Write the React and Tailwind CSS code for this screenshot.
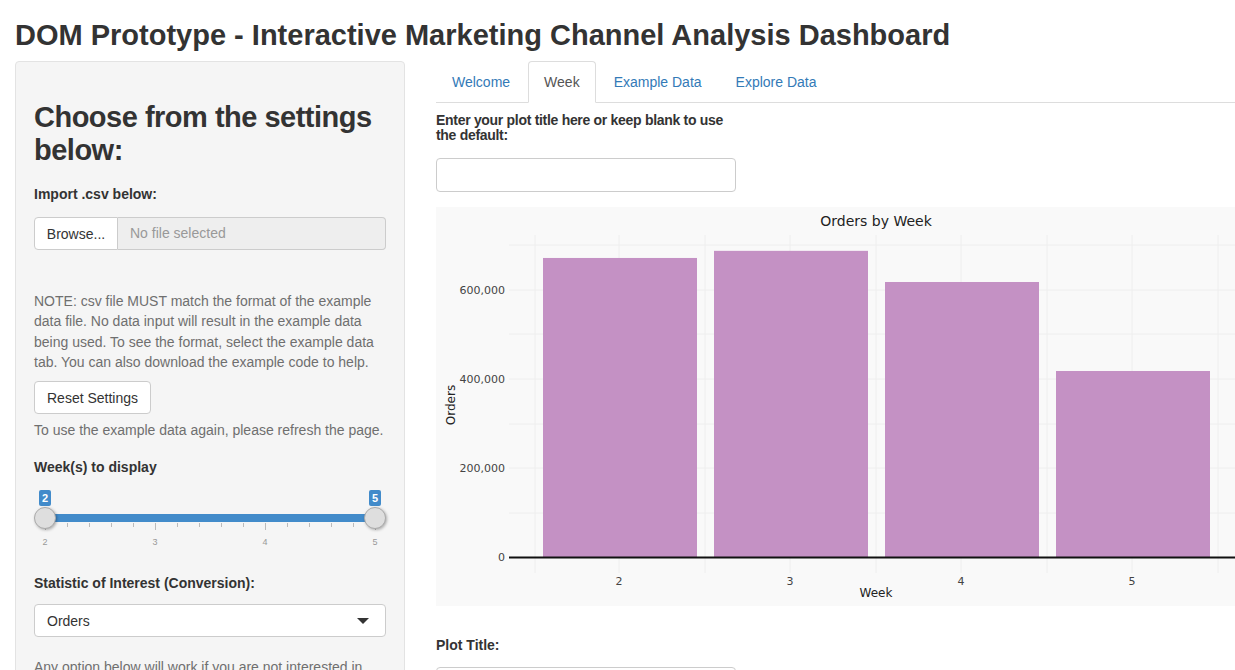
import { useState } from 'react';

const weeks = [
    { week: 2, orders: 672000 },
    { week: 3, orders: 688000 },
    { week: 4, orders: 618000 },
    { week: 5, orders: 418000 },
];

// chart geometry (svg coords)
const ZERO_Y = 350;
const PX_PER_ORDER = 89 / 200000;
const BAR_X = [107, 278, 449, 620];
const TICK_X = [183, 354, 525, 696];
const V_GRID = [99, 183, 269, 354, 440, 525, 611, 696, 782];
const H_GRID = [38, 83, 127, 172, 217, 261, 306];

function OrdersChart() {
    return (
        <svg width="810" height="399" className="block">
            <rect x="0" y="0" width="810" height="399" fill="#f9f9f9" />
            {V_GRID.map(x => (
                <line key={x} x1={x} x2={x} y1="28" y2="366" stroke="#eeeeee" strokeWidth="1" />
            ))}
            {H_GRID.map(y => (
                <line key={y} x1="73" x2="810" y1={y} y2={y} stroke="#eeeeee" strokeWidth="1" />
            ))}
            {weeks.map((w, i) => {
                const h = w.orders * PX_PER_ORDER;
                return <rect key={w.week} x={BAR_X[i]} y={ZERO_Y - h} width="154" height={h} fill="#c491c4" />;
            })}
            <line x1="73" x2="810" y1={ZERO_Y + 0.5} y2={ZERO_Y + 0.5} stroke="#111" strokeWidth="2" />
            <g fontFamily='"DejaVu Sans", Verdana, sans-serif' fontSize="11" fill="#444">
                {[['600,000', 83], ['400,000', 172], ['200,000', 261], ['0', 350]].map(([t, y]) => (
                    <text key={t} x="69" y={y + 4} textAnchor="end">{t}</text>
                ))}
                {weeks.map((w, i) => (
                    <text key={w.week} x={TICK_X[i]} y="378" textAnchor="middle">{w.week}</text>
                ))}
            </g>
            <g fontFamily='"DejaVu Sans", Verdana, sans-serif' fill="#222">
                <text x="440" y="19" fontSize="14" textAnchor="middle">Orders by Week</text>
                <text x="440" y="390" fontSize="12" textAnchor="middle">Week</text>
                <text x="0" y="0" fontSize="12" textAnchor="middle" transform="translate(19 198) rotate(-90)">Orders</text>
            </g>
        </svg>
    );
}

function RangeSlider() {
    const minorTicks = [];
    for (let i = 0; i <= 15; i++) minorTicks.push(i);
    return (
        <div className="relative h-[70px] mt-[10px]">
            {/* value labels */}
            <span className="absolute left-[5px] top-[3px] h-[16px] w-[12px] rounded-[2px] bg-[#428bca] text-white text-[11px] font-bold leading-[16px] text-center">2</span>
            <span className="absolute left-[335px] top-[3px] h-[16px] w-[12px] rounded-[2px] bg-[#428bca] text-white text-[11px] font-bold leading-[16px] text-center">5</span>
            {/* track */}
            <div className="absolute left-[11px] top-[27px] h-[8px] w-[330px] bg-[#428bca]" />
            {/* ticks */}
            {minorTicks.map(i => (
                <div
                    key={i}
                    className={`absolute top-[36px] w-px bg-[#bbb] ${i % 5 === 0 ? 'h-[7px]' : 'h-[4px]'}`}
                    style={{ left: 11 + i * 22 }}
                />
            ))}
            {[2, 3, 4, 5].map((n, i) => (
                <span key={n} className="absolute top-[45px] w-[20px] -ml-[10px] text-center text-[9px] text-[#999]" style={{ left: 11 + i * 110 }}>{n}</span>
            ))}
            {/* handles */}
            <div className="absolute left-0 top-[20px] h-[22px] w-[22px] rounded-full bg-[#dedede] border border-[#ababab] shadow-[1px_1px_3px_rgba(0,0,0,0.3)]" />
            <div className="absolute left-[330px] top-[20px] h-[22px] w-[22px] rounded-full bg-[#dedede] border border-[#ababab] shadow-[1px_1px_3px_rgba(0,0,0,0.3)]" />
        </div>
    );
}

export default function App() {
    const [tab, setTab] = useState('Week');
    const tabs = ['Welcome', 'Week', 'Example Data', 'Explore Data'];

    return (
        <div className="w-[1235px] h-[670px] overflow-hidden bg-white text-[#333] text-[14px] leading-[20px] font-['Liberation_Sans',Arial,sans-serif]">
            <div className="w-[1260px] px-[15px]">
                <h2 className="pt-[19px] mb-[9px] text-[29px] leading-[33px] font-bold">
                    DOM Prototype - Interactive Marketing Channel Analysis Dashboard
                </h2>

                <div className="flex">
                    {/* Sidebar */}
                    <div className="w-[390px] shrink-0">
                        <div className="h-[700px] bg-[#f5f5f5] border border-[#e3e3e3] rounded-[4px] px-[18px] pt-[19px]">
                            <h2 className="mt-[20px] text-[29px] leading-[33px] font-bold tracking-[-0.5px]">Choose from the settings below:</h2>

                            <div className="mt-[17px] font-bold">Import .csv below:</div>
                            <div className="mt-[13px] flex h-[33px]">
                                <button className="w-[84px] bg-white border border-[#ccc] rounded-l-[4px] text-[14px]">Browse...</button>
                                <div className="flex-1 bg-[#eeeeee] border border-l-0 border-[#ccc] rounded-r-[4px] px-[12px] leading-[31px] text-[#999]">
                                    No file selected
                                </div>
                            </div>

                            <p className="mt-[41px] text-[#6f6f6f] leading-[20.3px]">
                                NOTE: csv file MUST match the format of the example data file. No data input will result in the example data being used. To see the format, select the example data tab. You can also download the example code to help.
                            </p>

                            <button className="mt-[9px] h-[33px] px-[12px] bg-white border border-[#ccc] rounded-[4px] text-[14px]">Reset Settings</button>
                            <p className="mt-[6px] text-[#6f6f6f]">To use the example data again, please refresh the page.</p>

                            <div className="mt-[17px] font-bold">Week(s) to display</div>
                            <RangeSlider />

                            <div className="mt-[16px] font-bold">Statistic of Interest (Conversion):</div>
                            <div className="mt-[11px] h-[33px] bg-white border border-[#ccc] rounded-[4px] flex items-center justify-between px-[12px]">
                                <span>Orders</span>
                                <span className="mr-[4px] w-0 h-0 border-l-[6px] border-r-[6px] border-t-[6px] border-l-transparent border-r-transparent border-t-[#333]" />
                            </div>

                            <p className="mt-[20px] text-[#6f6f6f]">Any option below will work if you are not interested in</p>
                        </div>
                    </div>

                    {/* Main panel */}
                    <div className="flex-1 pl-[31px]">
                        <ul className="flex border-b border-[#ddd] w-[800px]">
                            {tabs.map(t => (
                                <li key={t} className="mr-[2px] -mb-px">
                                    <button
                                        onClick={() => setTab(t)}
                                        className={`h-[42px] px-[15px] rounded-t-[4px] border text-[14px] ${tab === t
                                            ? 'bg-white border-[#ddd] border-b-white text-[#555]'
                                            : 'border-transparent text-[#337ab7]'
                                            }`}
                                    >
                                        {t}
                                    </button>
                                </li>
                            ))}
                        </ul>

                        <div className="mt-[10px] w-[300px] font-bold leading-[15px] tracking-[-0.3px]">
                            Enter your plot title here or keep blank to use the default:
                        </div>
                        <input className="mt-[15px] block w-[300px] h-[34px] border border-[#ccc] rounded-[4px] bg-white" />

                        <div className="mt-[15px]">
                            <OrdersChart />
                        </div>

                        <div className="mt-[29px] font-bold">Plot Title:</div>
                        <input className="mt-[12px] block w-[300px] h-[34px] border border-[#ccc] rounded-[4px] bg-white" />
                    </div>
                </div>
            </div>
        </div>
    );
}
